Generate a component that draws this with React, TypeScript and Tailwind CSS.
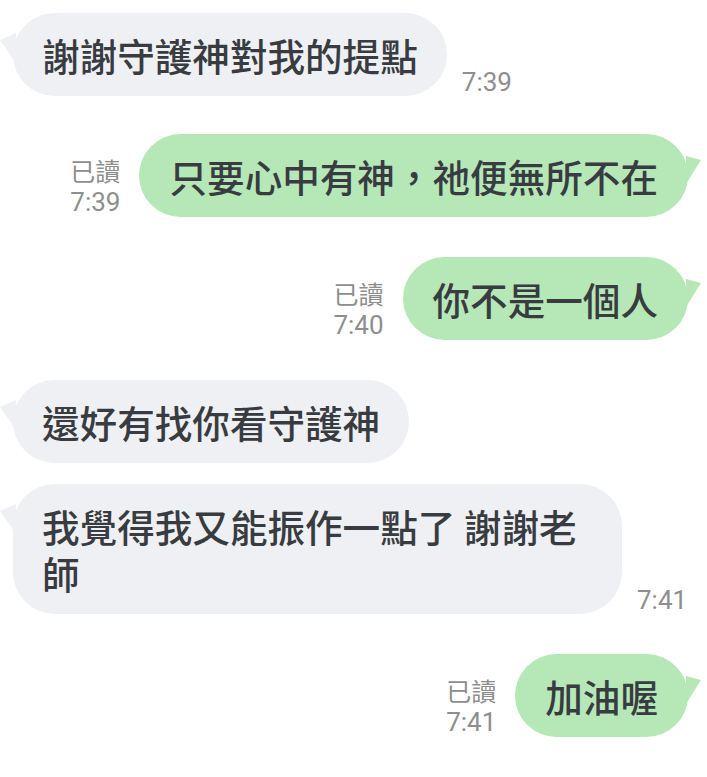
import React from "react";

const cjk = { fontFamily: '"Noto Sans CJK TC", "Noto Sans", sans-serif' };
const roboto = { fontFamily: 'Roboto, "Noto Sans CJK TC", sans-serif' };

function LeftTail() {
  return (
    <svg className="absolute left-[-13px] top-[20px]" width="16" height="30" viewBox="0 0 16 30">
      <polygon points="16,0 0,7 16,30" fill="#eff0f3" />
    </svg>
  );
}

function RightTail() {
  return (
    <svg className="absolute right-[-14px] top-[22px]" width="16" height="28" viewBox="0 0 16 28">
      <polygon points="0,0 15,4 0,28" fill="#b6e8b7" />
    </svg>
  );
}

function Left({ text, time, maxW }: { text: string; time?: string; maxW?: boolean }) {
  return (
    <div className="flex items-end gap-[15px]">
      <div
        className={`relative rounded-[42px] bg-[#eff0f3] px-[29px] py-[18px] text-[37.6px] leading-[47px] font-medium text-[#383c41] ${maxW ? "w-[609px]" : ""}`}
        style={cjk}
      >
        <LeftTail />
        {text}
      </div>
      {time && (
        <div className="text-[26px] leading-[28px] text-[#8e8e8e]" style={roboto}>
          {time}
        </div>
      )}
    </div>
  );
}

function Right({ text, time }: { text: string; time: string }) {
  return (
    <div className="flex items-end justify-end gap-[19px]">
      <div className="flex flex-col text-[25px] text-[#8e8e8e]">
        <span className="leading-[34px]" style={cjk}>已讀</span>
        <span className="text-[26px] leading-[30px]" style={roboto}>{time}</span>
      </div>
      <div
        className="relative rounded-[42px] bg-[#b6e8b7] px-[30px] py-[18px] text-[37.6px] leading-[47px] font-medium text-[#383c41]"
        style={cjk}
      >
        <RightTail />
        {text}
      </div>
    </div>
  );
}

export default function App() {
  return (
    <div className="w-[707px] h-[777px] bg-white overflow-hidden">
      <div className="flex flex-col pl-[13px] pr-[19px] pt-[13px]">
        <Left text="謝謝守護神對我的提點" time="7:39" />
        <div className="h-[38px]" />
        <Right text="只要心中有神，祂便無所不在" time="7:39" />
        <div className="h-[40px]" />
        <Right text="你不是一個人" time="7:40" />
        <div className="h-[40px]" />
        <Left text="還好有找你看守護神" />
        <div className="h-[21px]" />
        <Left text="我覺得我又能振作一點了 謝謝老師" time="7:41" maxW />
        <div className="h-[40px]" />
        <Right text="加油喔" time="7:41" />
      </div>
    </div>
  );
}
